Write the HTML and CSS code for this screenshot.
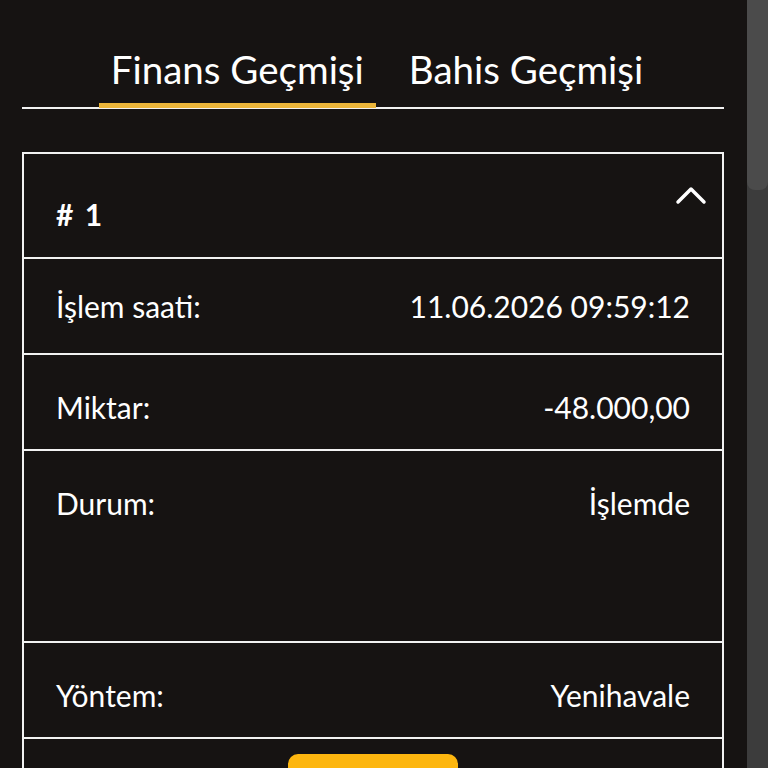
FILE: index.html
```html
<!DOCTYPE html>
<html lang="tr">

<head>
    <meta charset="UTF-8">
    <meta name="viewport" content="width=device-width, initial-scale=1.0">
    <title>Finans Geçmişi</title>
    <link rel="stylesheet" href="styles.css">
</head>

<body>
    <div class="page">
        <!-- Tabs -->
        <nav class="tabs">
            <div class="tab active">Finans Geçmişi</div>
            <div class="tab">Bahis Geçmişi</div>
        </nav>

        <!-- Transaction card -->
        <div class="card">
            <div class="card-head">
                <span class="card-no"># 1</span>
                <svg class="chevron" width="32" height="20" viewBox="0 0 32 20">
                    <path d="M3 17 L16 4 L29 17" fill="none" stroke="#fff" stroke-width="3.5" stroke-linecap="round" stroke-linejoin="round"/>
                </svg>
            </div>
            <div class="row first">
                <span>İşlem saati:</span>
                <span>11.06.2026 09:59:12</span>
            </div>
            <div class="row">
                <span>Miktar:</span>
                <span>-48.000,00</span>
            </div>
            <div class="row tall">
                <span>Durum:</span>
                <span>İşlemde</span>
            </div>
            <div class="row">
                <span>Yöntem:</span>
                <span>Yenihavale</span>
            </div>
            <div class="row-action">
                <button class="cancel-btn">İptal</button>
            </div>
        </div>
    </div>

    <!-- fake scrollbar -->
    <div class="scrollbar"><div class="thumb"></div></div>
</body>

</html>
```

FILE: styles.css
```css
body {
    margin: 0;
    background-color: #161312;
    font-family: Lato, "Noto Sans", sans-serif;
    color: #fff;
    overflow: hidden;
}

.page {
    width: 702px;
    padding: 0 23px 0 22px;
}

.tabs {
    display: flex;
    justify-content: center;
    gap: 21px;
    padding-top: 43px;
    border-bottom: 2px solid #f2f2f2;
    padding-left: 8px;
}

.tab {
    font-size: 38.5px;
    line-height: 52px;
    padding: 0 12px 8px;
    border-bottom: 5px solid transparent;
    margin-bottom: -1px;
}

.tab.active {
    border-bottom-color: #ecb63a;
}

.card {
    margin-top: 43px;
    border: 2px solid #f2f2f2;
}

.card-head {
    height: 103px;
    display: flex;
    justify-content: space-between;
    padding: 0 15px 0 32px;
    border-bottom: 2px solid #f2f2f2;
}

.card-no {
    font-size: 30px;
    font-weight: 700;
    line-height: 30px;
    padding-top: 45px;
    word-spacing: 4px;
}

.chevron {
    margin-top: 31px;
}

.row {
    display: flex;
    justify-content: space-between;
    height: 94px;
    padding: 0 32px;
    font-size: 30px;
    line-height: 104px;
    border-bottom: 2px solid #f2f2f2;
}

.row.first {
    line-height: 94px;
}

.row.tall {
    height: 190px;
}

.row-action {
    display: flex;
    justify-content: center;
    padding: 15px 0;
}

.cancel-btn {
    width: 170px;
    height: 60px;
    border: none;
    border-radius: 10px;
    background-color: #fdb60f;
    color: #161312;
    font-family: Lato, sans-serif;
    font-size: 26px;
    font-weight: 700;
}

.scrollbar {
    position: fixed;
    top: 0;
    right: 0;
    width: 21px;
    height: 100%;
    background-color: #3c3c3c;
}

.thumb {
    height: 190px;
    background-color: #4b4b4b;
    border-radius: 0 0 8px 8px;
}
```
